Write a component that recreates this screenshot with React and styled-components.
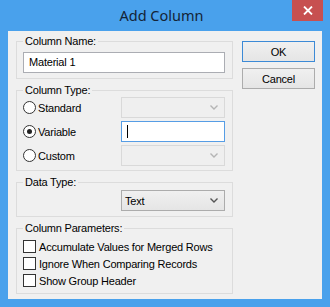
import React from 'react';
import styled, { createGlobalStyle } from 'styled-components';

const GlobalStyle = createGlobalStyle`
  html, body {
    margin: 0;
    padding: 0;
    background: #ffffff;
  }
  * {
    box-sizing: border-box;
  }
`;

const Window = styled.div`
  width: 330px;
  height: 307px;
  background: #49a1ec;
  display: flex;
  flex-direction: column;
  font-family: "Liberation Sans", Arial, sans-serif;
  font-size: 11px;
  letter-spacing: -0.2px;
  color: #000;
`;

const TitleBar = styled.div`
  height: 31px;
  flex: none;
  display: grid;
  grid-template-columns: 1fr auto 1fr;
  padding-right: 7px;
`;

const Title = styled.div`
  grid-column: 2;
  font-family: "Noto Sans", "Open Sans", sans-serif;
  font-size: 14.5px;
  letter-spacing: 0;
  line-height: 31px;
  color: #142436;
`;

const CloseButton = styled.div`
  grid-column: 3;
  justify-self: end;
  width: 31px;
  height: 21px;
  background: #c75050;
  display: flex;
  align-items: center;
  justify-content: center;
`;

const Client = styled.div`
  flex: 1;
  margin: 0 8px 8px;
  background: #f0f0f0;
  display: flex;
  gap: 9px;
  padding: 4px 0 0 8px;
`;

const LeftColumn = styled.div`
  width: 217px;
  display: flex;
  flex-direction: column;
  gap: 5px;
`;

const Group = styled.fieldset`
  margin: 0;
  padding: 0 6px ${p => p.pb || 5}px;
  border: 1px solid #dcdcdc;
  min-width: 0;
`;

const Legend = styled.legend`
  padding: 0 2px;
  font-size: 11px;
  line-height: 13px;
`;

const TextBox = styled.div`
  width: ${p => p.w || 202}px;
  height: 21px;
  margin-top: ${p => p.mt || 0}px;
  background: #fff;
  border: 1px solid ${p => (p.focused ? '#569de5' : '#abadb3')};
  padding: 0 5px;
  display: flex;
  align-items: center;
  line-height: 13px;
`;

const Caret = styled.span`
  width: 1px;
  height: 13px;
  background: #000;
`;

const Combo = styled.div`
  width: 104px;
  height: 21px;
  border: 1px solid ${p => (p.disabled ? '#d9d9d9' : '#acacac')};
  background: ${p =>
    p.disabled ? '#efefef' : 'linear-gradient(#f0f0f0, #e5e5e5)'};
  display: flex;
  align-items: center;
  justify-content: space-between;
  padding: 0 6px 0 3px;
  margin-left: ${p => p.ml || 0}px;
  margin-top: ${p => p.mt || 0}px;
`;

const Rows = styled.div`
  display: flex;
  flex-direction: column;
  gap: ${p => p.gap || 0}px;
  margin-top: ${p => p.mt || 0}px;
`;

const Row = styled.div`
  height: ${p => p.h || 21}px;
  display: flex;
  align-items: center;
`;

const RadioLabel = styled.label`
  width: 98px;
  display: flex;
  align-items: center;
  gap: 2px;
`;

const RadioCircle = styled.span`
  width: 13px;
  height: 13px;
  border-radius: 50%;
  border: 1px solid #333;
  background: #fff;
  display: flex;
  align-items: center;
  justify-content: center;
  &::after {
    content: '';
    display: ${p => (p.checked ? 'block' : 'none')};
    width: 5px;
    height: 5px;
    border-radius: 50%;
    background: #222;
  }
`;

const CheckBox = styled.span`
  width: 13px;
  height: 13px;
  border: 1px solid #333;
  background: #fff;
  margin-right: 3px;
`;

const RightColumn = styled.div`
  display: flex;
  flex-direction: column;
  gap: 6px;
  padding-top: 6px;
`;

const Button = styled.div`
  width: 73px;
  height: 21px;
  border: 1px solid ${p => (p.primary ? '#3c8ad6' : '#acacac')};
  background: linear-gradient(#f0f0f0, #e5e5e5);
  display: flex;
  align-items: center;
  justify-content: center;
`;

const Chevron = ({ color }) => (
  <svg width="8" height="5" viewBox="0 0 8 5">
    <path d="M0.5 0.5 L4 4 L7.5 0.5" fill="none" stroke={color} strokeWidth="1.4" />
  </svg>
);

const radios = [
  { label: 'Standard', checked: false, control: 'combo' },
  { label: 'Variable', checked: true, control: 'text' },
  { label: 'Custom', checked: false, control: 'combo' },
];

const params = [
  'Accumulate Values for Merged Rows',
  'Ignore When Comparing Records',
  'Show Group Header',
];

export default function App() {
  return (
    <>
      <GlobalStyle />
      <Window>
        <TitleBar>
          <Title>Add Column</Title>
          <CloseButton>
            <svg width="10" height="9" viewBox="0 0 10 9">
              <path d="M1 0.5 L9 8.5 M9 0.5 L1 8.5" stroke="#fff" strokeWidth="1.8" />
            </svg>
          </CloseButton>
        </TitleBar>
        <Client>
          <LeftColumn>
            <Group>
              <Legend>Column Name:</Legend>
              <TextBox mt={4}>Material 1</TextBox>
            </Group>
            <Group pb={4}>
              <Legend>Column Type:</Legend>
              <Rows gap={3}>
                {radios.map(r => (
                  <Row key={r.label}>
                    <RadioLabel>
                      <RadioCircle checked={r.checked} />
                      {r.label}
                    </RadioLabel>
                    {r.control === 'combo' ? (
                      <Combo disabled>
                        <span />
                        <Chevron color="#b4b4b4" />
                      </Combo>
                    ) : (
                      <TextBox w={104} focused>
                        <Caret />
                      </TextBox>
                    )}
                  </Row>
                ))}
              </Rows>
            </Group>
            <Group pb={5}>
              <Legend>Data Type:</Legend>
              <Combo ml={98} mt={1}>
                <span>Text</span>
                <Chevron color="#555" />
              </Combo>
            </Group>
            <Group pb={4}>
              <Legend>Column Parameters:</Legend>
              <Rows mt={3}>
                {params.map(p => (
                  <Row key={p} h={17}>
                    <CheckBox />
                    {p}
                  </Row>
                ))}
              </Rows>
            </Group>
          </LeftColumn>
          <RightColumn>
            <Button primary>OK</Button>
            <Button>Cancel</Button>
          </RightColumn>
        </Client>
      </Window>
    </>
  );
}
